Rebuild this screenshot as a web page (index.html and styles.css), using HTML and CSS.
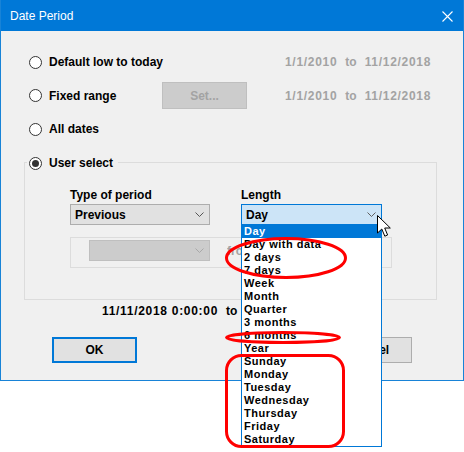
FILE: index.html
```html
<!DOCTYPE html>
<html lang="en">
<head>
    <meta charset="UTF-8">
    <title>Date Period</title>
    <link rel="stylesheet" href="styles.css">
</head>
<body>
    <div class="screen">
        <div class="dialog">
            <div class="titlebar">
                <span class="title">Date Period</span>
                <svg class="close" width="11" height="11" viewBox="0 0 11 11">
                    <path d="M0.5 0.5 L10.5 10.5 M10.5 0.5 L0.5 10.5" stroke="#fff" stroke-width="1.1" fill="none"/>
                </svg>
            </div>

            <div class="content">
                <div class="row row-a">
                    <div class="opt"><span class="radio"></span>Default low to today</div>
                    <div class="slot"></div>
                    <div class="range"><span class="num">1/1/2010</span><span>to</span><span class="num">11/12/2018</span></div>
                </div>
                <div class="row row-b">
                    <div class="opt"><span class="radio"></span>Fixed range</div>
                    <div class="slot"><button class="set-btn">Set...</button></div>
                    <div class="range"><span class="num">1/1/2010</span><span>to</span><span class="num">11/12/2018</span></div>
                </div>
                <div class="row row-a">
                    <div class="opt"><span class="radio"></span>All dates</div>
                </div>

                <div class="group">
                    <div class="group-head"><span class="radio checked"></span>User select</div>

                    <div class="cols">
                        <div class="col col-type">
                            <div class="field-label">Type of period</div>
                            <div class="combo">
                                <span>Previous</span>
                                <svg class="chev" width="9" height="5" viewBox="0 0 9 5"><path d="M0.5 0.5 L4.5 4.5 L8.5 0.5" stroke="#555" fill="none"/></svg>
                            </div>
                        </div>
                        <div class="col col-len">
                            <div class="field-label">Length</div>
                            <div class="combo combo-open">
                                <span>Day</span>
                                <svg class="chev" width="9" height="5" viewBox="0 0 9 5"><path d="M0.5 0.5 L4.5 4.5 L8.5 0.5" stroke="#555" fill="none"/></svg>
                                <ul class="list">
                                    <li class="active">Day</li>
                                    <li>Day with data</li>
                                    <li>2 days</li>
                                    <li>7 days</li>
                                    <li>Week</li>
                                    <li>Month</li>
                                    <li>Quarter</li>
                                    <li>3 months</li>
                                    <li>6 months</li>
                                    <li>Year</li>
                                    <li>Sunday</li>
                                    <li>Monday</li>
                                    <li>Tuesday</li>
                                    <li>Wednesday</li>
                                    <li>Thursday</li>
                                    <li>Friday</li>
                                    <li>Saturday</li>
                                </ul>
                            </div>
                        </div>
                    </div>

                    <div class="subbox">
                        <div class="combo combo-disabled">
                            <svg class="chev" width="9" height="5" viewBox="0 0 9 5"><path d="M0.5 0.5 L4.5 4.5 L8.5 0.5" stroke="#a8a8a8" fill="none"/></svg>
                        </div>
                        <span class="muted">from</span>
                    </div>
                </div>

                <div class="span-line"><span class="num">11/11/2018 0:00:00</span><span>to</span></div>

                <div class="buttons">
                    <button class="btn btn-default">OK</button>
                    <button class="btn btn-cancel">Cancel</button>
                </div>
            </div>
        </div>

        <!-- annotation marks -->
        <svg class="marks" width="464" height="452" viewBox="0 0 464 452">
            <ellipse cx="286" cy="258" rx="59.5" ry="19.5"/>
            <ellipse cx="283" cy="337.5" rx="56.5" ry="5"/>
            <rect x="226.5" y="355.5" width="117" height="91" rx="15"/>
        </svg>

        <svg class="cursor" width="16" height="24" viewBox="0 0 16 24">
            <path d="M0.5 0.5 L0.5 18 L4.8 14 L7.8 21.2 L10.6 20 L7.7 13 L13.3 13 Z" fill="#fff" stroke="#000" stroke-width="1"/>
        </svg>
    </div>
</body>
</html>
```

FILE: styles.css
```css
* {
    box-sizing: border-box;
}

body {
    margin: 0;
    background: #fff;
    font-family: 'Liberation Sans', Arial, sans-serif;
    font-size: 12px;
    font-weight: bold;
    color: #000;
}

.screen {
    position: relative;
    width: 464px;
    height: 452px;
    overflow: hidden;
}

.dialog {
    width: 464px;
    border: 1px solid #1883d7;
    border-top: none;
    background: #f0f0f0;
}

.titlebar {
    height: 31px;
    background: #0078d7;
    display: flex;
    align-items: center;
    justify-content: space-between;
    padding: 1px 10px 0 9px;
}

.title {
    color: #fff;
    font-weight: normal;
    font-size: 12px;
}

.content {
    padding: 14px 0 17px 23px;
}

.row {
    display: flex;
    align-items: center;
    padding-left: 5px;
    height: 34px;
    white-space: nowrap;
}

.row-b {
    height: 33px;
}

.opt {
    width: 133px;
    display: flex;
    align-items: center;
    flex-shrink: 0;
}

.radio {
    width: 13px;
    height: 13px;
    border: 1px solid #333;
    border-radius: 50%;
    background: #fff;
    margin-right: 7px;
    display: flex;
    align-items: center;
    justify-content: center;
    flex-shrink: 0;
}

.radio.checked::after {
    content: "";
    width: 7px;
    height: 7px;
    border-radius: 50%;
    background: #333;
}

.slot {
    width: 85px;
    flex-shrink: 0;
}

.set-btn {
    width: 85px;
    height: 27px;
    background: #cccccc;
    border: 1px solid #bfbfbf;
    color: #a3a3a3;
    font-family: inherit;
    font-size: 12px;
    font-weight: bold;
    padding: 0;
}

.range {
    margin-left: 38px;
    display: flex;
    gap: 8px;
    color: #a3a3a3;
}

.num {
    letter-spacing: 0.7px;
}

.group {
    width: 413px;
    margin-top: 16px;
    border: 1px solid #dcdcdc;
    padding-bottom: 31px;
}

.group-head {
    display: flex;
    align-items: center;
    width: fit-content;
    height: 16px;
    margin: -8px 0 0 2px;
    padding: 0 5px 0 2px;
    background: #f0f0f0;
}

.cols {
    display: flex;
    gap: 31px;
    margin: 17px 0 0 45px;
}

.field-label {
    height: 14px;
    line-height: 14px;
}

.combo {
    position: relative;
    height: 21px;
    margin-top: 2px;
    display: flex;
    align-items: center;
    justify-content: space-between;
    padding: 0 5px 0 4px;
    background: #e1e1e1;
    border: 1px solid #adadad;
}

.col-type .combo {
    width: 140px;
}

.col-len .combo {
    width: 141px;
}

.combo-open {
    background: #cce4f7;
    border-color: #0078d7;
}

.combo-open .chev path {
    stroke: #606060;
}

.list {
    position: absolute;
    top: 100%;
    left: -1px;
    width: 141px;
    margin: 0;
    padding: 0;
    list-style: none;
    background: #fff;
    border: 1px solid #0078d7;
    z-index: 2;
}

.list li {
    height: 13px;
    line-height: 13px;
    font-size: 11px;
    letter-spacing: 0.5px;
    padding-left: 2px;
    white-space: nowrap;
}

.list li.active {
    background: #0078d7;
    color: #fff;
}

.subbox {
    width: 322px;
    height: 31px;
    margin: 12px 0 0 45px;
    border: 1px solid #dcdcdc;
    display: flex;
    align-items: flex-start;
    padding: 2px 0 0 18px;
}

.combo-disabled {
    width: 121px;
    margin-top: 0;
    background: #cccccc;
    border-color: #bfbfbf;
    justify-content: flex-end;
}

/* only the first letters show left of the open list */
.muted {
    color: #a3a3a3;
    margin: 4px 0 0 17px;
    width: 14px;
    overflow: hidden;
    white-space: nowrap;
}

.span-line {
    display: flex;
    gap: 8px;
    height: 14px;
    line-height: 14px;
    margin-top: 4px;
    padding-left: 78px;
}

.buttons {
    display: flex;
    margin-top: 19px;
    padding-left: 28px;
}

.btn {
    width: 85px;
    height: 26px;
    background: #e1e1e1;
    border: 1px solid #adadad;
    font-family: inherit;
    font-size: 12px;
    font-weight: bold;
    color: #000;
    padding: 0;
}

.btn-default {
    border: 2px solid #0078d7;
}

.btn-cancel {
    margin-left: 190px;
}

.marks {
    position: absolute;
    top: 0;
    left: 0;
    z-index: 3;
    pointer-events: none;
}

.marks ellipse,
.marks rect {
    fill: none;
    stroke: #ff0000;
    stroke-width: 3;
}

.cursor {
    position: absolute;
    left: 377px;
    top: 215px;
    z-index: 4;
}
```
